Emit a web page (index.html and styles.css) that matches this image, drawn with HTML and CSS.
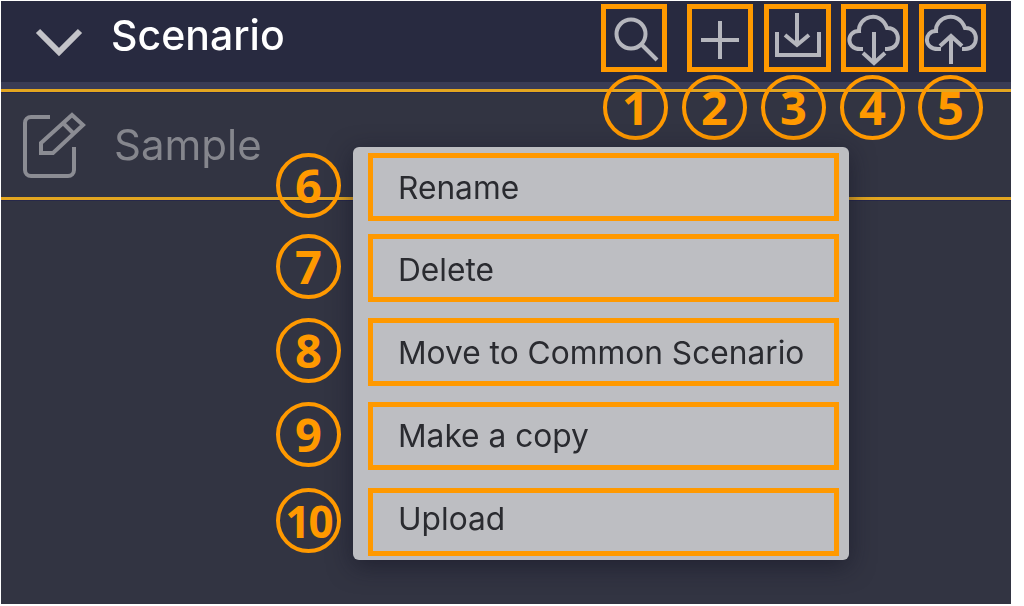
FILE: index.html
```html
<!DOCTYPE html>
<html lang="en">
<head>
<meta charset="utf-8">
<title>Scenario</title>
<link rel="stylesheet" href="styles.css">
</head>
<body>
<main class="panel">
  <header class="header">
    <svg class="chevron soft" viewBox="30 20 60 40" width="60" height="40"><path d="M38 31 59 52 80 31"/></svg>
    <h1 class="title soft">Scenario</h1>
    <div class="toolbar">
      <button class="tool tool-narrow tool-search" type="button">
        <svg class="soft" viewBox="606 9 56 58"><circle cx="631" cy="34" r="14.5"/><path d="M642 45 657 60"/></svg>
        <span class="num num-a">1</span>
      </button>
      <button class="tool tool-narrow" type="button">
        <svg class="soft" viewBox="692 9 56 58"><path d="M701 40H739M720 21V59"/></svg>
        <span class="num num-b">2</span>
      </button>
      <button class="tool" type="button">
        <svg class="soft" viewBox="769 9 57 58"><path d="M777 32V55H819V32M797 13V44M785 35 797 45 809 35"/></svg>
        <span class="num num-c">3</span>
      </button>
      <button class="tool tool-tight" type="button">
        <svg class="soft" viewBox="846 9 57 58"><path d="M863 49H860C846 49 846 31 859 31 858 17 880 9 887 28 901 27 902 49 887 49H885M874 32V62M863 53 874 63 885 53"/></svg>
        <span class="num num-d">4</span>
      </button>
      <button class="tool" type="button">
        <svg class="soft" viewBox="924 9 57 58"><path d="M941 49H938C923 49 924 31 936 31 935 17 958 9 965 28 979 27 980 49 965 49H962M951 36V64M940 46 951 36 962 46"/></svg>
        <span class="num num-e">5</span>
      </button>
    </div>
  </header>
  <div class="strip"></div>
  <div class="row">
    <svg class="edit soft" viewBox="20 108 68 72" width="68" height="72"><path d="M50 116H31a6 6 0 0 0-6 6V169a6 6 0 0 0 6 6H68a6 6 0 0 0 6-6V146"/><path d="M41 142 72 114 83 124 53 152H41ZM63 122 74 133"/></svg>
    <span class="row-name soft">Sample</span>
  </div>
  <div class="menu">
    <div class="item item-6"><span class="num side">6</span><span class="soft">Rename</span></div>
    <div class="item item-7"><span class="num side">7</span><span class="soft nudge-down">Delete</span></div>
    <div class="item item-8"><span class="num side">8</span><span class="soft">Move to Common Scenario</span></div>
    <div class="item item-9"><span class="num side">9</span><span class="soft nudge-up">Make a copy</span></div>
    <div class="item item-10"><span class="num side ten">10</span><span class="soft up">Upload</span></div>
  </div>
</main>
</body>
</html>
```
FILE: styles.css
```css
* { box-sizing: border-box; }
html, body { margin: 0; padding: 0; height: 100%; background: #fff; overflow: hidden; }
body { font-family: Inter, "Liberation Sans", sans-serif; }

.panel {
  position: relative;
  display: flex;
  flex-direction: column;
  width: 1010px;
  height: 603px;
  margin: 1px 0 0 1px;
  background: #323442;
}
.soft { filter: blur(0.7px); }

.header {
  position: relative;
  display: flex;
  align-items: flex-start;
  height: 81px;
  padding: 3px 0 0 29px;
  background: #282a40;
}
.chevron { margin-top: 16px; fill: none; stroke: #c3c3c8; stroke-width: 6; }
.title {
  margin: 6px 0 0 21px;
  font-size: 41px;
  line-height: 50px;
  font-weight: 500;
  color: #fff;
}
.toolbar { display: flex; gap: 11px; margin-left: auto; margin-right: 25px; }
.tool {
  position: relative;
  width: 67px;
  height: 68px;
  padding: 0;
  border: 5px solid #ff9900;
  background: none;
}
.tool-narrow { width: 66px; }
.tool-search { margin-right: 9px; }
.tool-tight { margin-left: -1px; }
.tool svg {
  display: block;
  width: 100%;
  height: 100%;
  fill: none;
  stroke: #b5b6bd;
  stroke-width: 4;
  overflow: visible;
}

.strip {
  height: 10px;
  background: #3a3c55;
  border-bottom: 3px solid #e3a620;
  box-shadow: 0 1px 0 #26284a;
}
.row {
  display: flex;
  align-items: center;
  height: 108px;
  padding-left: 19px;
  border-bottom: 3px solid #e3a620;
  box-shadow: 0 1px 0 #26284a;
}
.edit { fill: none; stroke: #8b8c93; stroke-width: 4; }
.row-name { margin-left: 26px; font-size: 42px; line-height: 50px; color: #85868d; }

.menu {
  position: absolute;
  left: 352px;
  top: 146px;
  display: flex;
  flex-direction: column;
  width: 496px;
  height: 413px;
  padding: 6px 10px 0 15px;
  border-radius: 6px;
  background: #bdbec2;
  box-shadow: 0 6px 24px rgba(18, 19, 34, 0.55);
}
.item {
  position: relative;
  display: flex;
  align-items: center;
  height: 68px;
  padding-left: 25px;
  border: 5px solid #ff9900;
  font-size: 31.7px;
  color: #2a2b30;
  flex: none;
}
.item-7 { margin-top: 13px; }
.item-8 { margin-top: 16px; }
.item-9 { margin-top: 16px; }
.item-10 { margin-top: 18px; }
.up { margin-top: -7px; }
.nudge-down { margin-top: 2px; }
.nudge-up { margin-top: -2px; }

.num {
  position: absolute;
  display: flex;
  align-items: center;
  justify-content: center;
  width: 65px;
  height: 65px;
  border: 4px solid #ff9900;
  border-radius: 50%;
  font-family: "Noto Sans", sans-serif;
  font-size: 47px;
  font-weight: 700;
  line-height: 1;
  color: #ff9900;
}
.side { left: -97px; top: -5px; }
.ten { font-size: 44px; letter-spacing: -2px; }
.num-a, .num-b, .num-c, .num-d, .num-e { top: 66px; }
.num-a { left: -3px; }
.num-b { left: -10px; }
.num-c { left: -8px; }
.num-d { left: -6px; }
.num-e { left: -6px; }
```
